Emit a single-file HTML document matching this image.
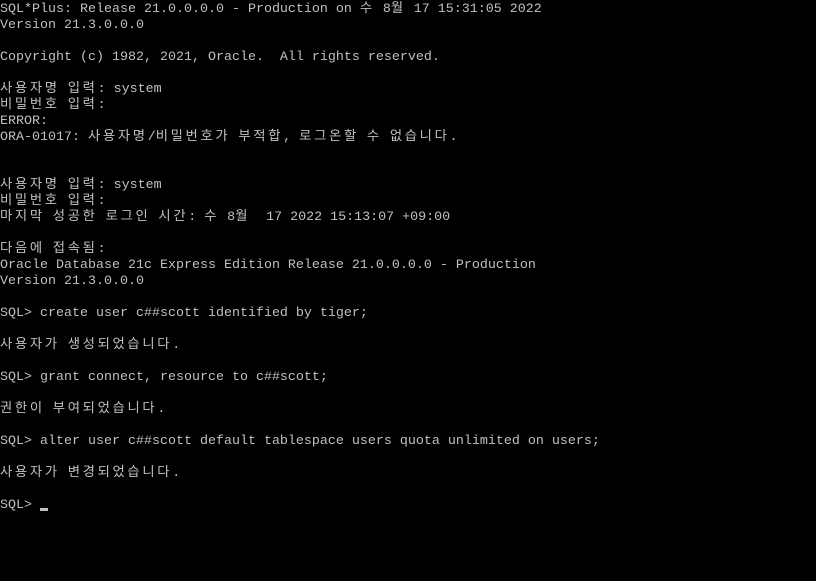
<!DOCTYPE html>
<html><head><meta charset="utf-8"><style>
html,body{margin:0;padding:0;background:#000;width:816px;height:581px;overflow:hidden}
#t{position:absolute;left:0;top:2px;color:#c0c0c0;font-family:"Liberation Mono",monospace;font-size:13.333px;line-height:16px}
#t div{height:16px;white-space:pre;line-height:16px}
.k{font-family:"Noto Sans CJK KR","NanumGothic",sans-serif;letter-spacing:2.667px;font-size:13.333px;line-height:0}
.cur{position:absolute;left:40px;top:508px;width:8px;height:3px;background:#c0c0c0}
</style></head><body>
<div id="t">
<div>SQL*Plus: Release 21.0.0.0.0 - Production on <span class="k">수</span> 8<span class="k">월</span> 17 15:31:05 2022</div>
<div>Version 21.3.0.0.0</div>
<div></div>
<div>Copyright (c) 1982, 2021, Oracle.  All rights reserved.</div>
<div></div>
<div><span class="k">사용자명</span> <span class="k">입력</span>: system</div>
<div><span class="k">비밀번호</span> <span class="k">입력</span>:</div>
<div>ERROR:</div>
<div>ORA-01017: <span class="k">사용자명</span>/<span class="k">비밀번호가</span> <span class="k">부적합</span>, <span class="k">로그온할</span> <span class="k">수</span> <span class="k">없습니다</span>.</div>
<div></div>
<div></div>
<div><span class="k">사용자명</span> <span class="k">입력</span>: system</div>
<div><span class="k">비밀번호</span> <span class="k">입력</span>:</div>
<div><span class="k">마지막</span> <span class="k">성공한</span> <span class="k">로그인</span> <span class="k">시간</span>: <span class="k">수</span> 8<span class="k">월</span>  17 2022 15:13:07 +09:00</div>
<div></div>
<div><span class="k">다음에</span> <span class="k">접속됨</span>:</div>
<div>Oracle Database 21c Express Edition Release 21.0.0.0.0 - Production</div>
<div>Version 21.3.0.0.0</div>
<div></div>
<div>SQL&gt; create user c##scott identified by tiger;</div>
<div></div>
<div><span class="k">사용자가</span> <span class="k">생성되었습니다</span>.</div>
<div></div>
<div>SQL&gt; grant connect, resource to c##scott;</div>
<div></div>
<div><span class="k">권한이</span> <span class="k">부여되었습니다</span>.</div>
<div></div>
<div>SQL&gt; alter user c##scott default tablespace users quota unlimited on users;</div>
<div></div>
<div><span class="k">사용자가</span> <span class="k">변경되었습니다</span>.</div>
<div></div>
<div>SQL&gt; </div>
</div>
<div class="cur"></div>
</body></html>
